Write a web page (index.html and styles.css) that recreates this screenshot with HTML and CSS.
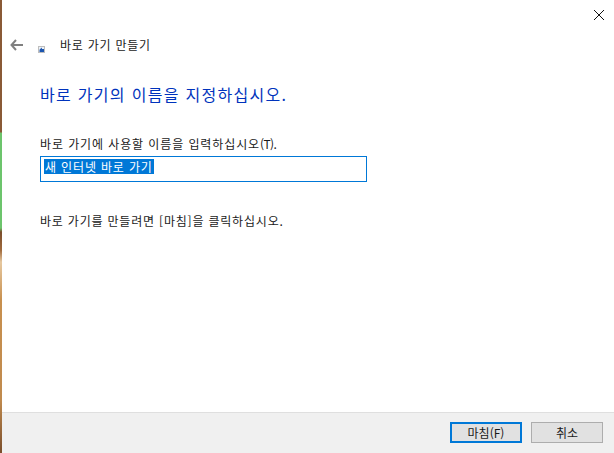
FILE: index.html
```html
<!DOCTYPE html>
<html lang="ko">
<head>
<meta charset="utf-8">
<title>바로 가기 만들기</title>
<link rel="stylesheet" href="styles.css">
</head>
<body>
<div class="strip"></div>
<div class="window">
  <div class="topbar">
    <svg class="close" width="10" height="10" viewBox="0 0 10 10"><path d="M0 0L10 10M10 0L0 10" stroke="#111" stroke-width="1" fill="none"/></svg>
  </div>
  <div class="nav">
    <svg class="back" width="13" height="12" viewBox="0 0 13 12"><path d="M6 1L1.5 6L6 11M1.5 6H13" stroke="#808080" stroke-width="2" fill="none"/></svg>
    <svg class="appicon" width="7" height="7" viewBox="0 0 7 7"><rect width="7" height="7" fill="#bdbdbd"/><rect x="1" y="1" width="5" height="5" fill="#eef2f6"/><path d="M1.5 6V3.8L3.6 1.4L4 3H6V6Z" fill="#1c56b0"/></svg>
    <span class="title">바로 가기 만들기</span>
  </div>
  <div class="content">
    <h1 class="heading">바로 가기의 이름을 지정하십시오.</h1>
    <label class="label">바로 가기에 사용할 이름을 입력하십시오<span class="mnemonic">(T).</span></label>
    <div class="field"><span class="selected">새 인터넷 바로 가기</span></div>
    <p class="hint">바로 가기를 만들려면 [마침]을 클릭하십시오.</p>
  </div>
  <div class="footer">
    <button class="btn primary">마침(F)</button>
    <button class="btn">취소</button>
  </div>
</div>
</body>
</html>
```
FILE: styles.css
```css
html, body {
  margin: 0;
  height: 100%;
}
body {
  display: flex;
  width: 614px;
  height: 453px;
  overflow: hidden;
  background: #fff;
  font-family: "Noto Sans CJK KR", "Noto Sans", sans-serif;
  color: #1a1a1a;
  font-size: 12px;
}
.strip {
  width: 2px;
  flex: none;
  background: linear-gradient(to bottom,
    #8a5a36 0, #8a5a36 132px,
    #6cc46c 133px, #6cc46c 228px,
    #7a4e2c 232px, #a06a3c 250px,
    #e6c8a0 262px, #c8904f 300px,
    #c08a4e 400px, #7a4e2c 453px);
}
.window {
  flex: 1;
  display: flex;
  flex-direction: column;
  min-width: 0;
}
.topbar {
  height: 35px;
  display: flex;
  justify-content: flex-end;
  padding: 10px 10px 0 0;
  box-sizing: border-box;
}
.close { display: block; }
.nav {
  height: 20px;
  display: flex;
  align-items: center;
}
.back { margin-left: 8px; }
.appicon { margin: 9px 0 0 15px; }
.title {
  margin-left: 15px;
  line-height: 20px;
  letter-spacing: 0.75px;
}
.content {
  flex: 1;
  padding: 0 0 0 38px;
}
.heading {
  margin: 28px 0 0;
  font-size: 16px;
  font-weight: 400;
  line-height: 22px;
  color: #0033bc;
  letter-spacing: 1.3px;
}
.label {
  display: block;
  margin-top: 30px;
  line-height: 18px;
  letter-spacing: 0.9px;
}
.mnemonic { letter-spacing: -0.6px; }
.field {
  box-sizing: border-box;
  width: 327px;
  height: 26px;
  margin-top: 3px;
  border: 1px solid #0078d7;
  padding: 2px 0 0 3px;
}
.selected {
  display: inline-block;
  height: 15px;
  line-height: 15px;
  padding: 0 1px;
  background: #0078d7;
  color: #fff;
  letter-spacing: 0.85px;
  vertical-align: top;
}
.hint {
  margin: 30px 0 0;
  line-height: 18px;
  letter-spacing: 0.8px;
}
.footer {
  height: 41px;
  box-sizing: border-box;
  border-top: 1px solid #dfdfdf;
  background: #f0f0f0;
  display: flex;
  justify-content: flex-end;
  gap: 9px;
  padding: 9px 11px 0 0;
}
.btn {
  box-sizing: border-box;
  width: 72px;
  height: 21px;
  padding: 0;
  border: 1px solid #adadad;
  outline: 0;
  background: #e1e1e1;
  font: inherit;
  line-height: 17px;
  color: #1a1a1a;
}
.primary {
  border: 2px solid #0078d7;
}
```
